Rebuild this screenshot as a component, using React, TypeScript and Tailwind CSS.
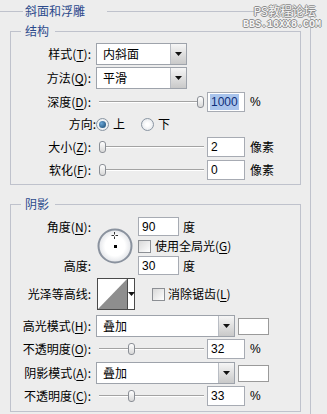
import type { ReactNode } from "react";

const U = ({ children }: { children: ReactNode }) => (
    <span className="underline underline-offset-[2px] decoration-[1px]">{children}</span>
);

const Label = ({ children }: { children: ReactNode }) => (
    <div className="w-[80px] shrink-0 text-right whitespace-nowrap">{children}</div>
);

const Arrow = () => (
    <svg width="7" height="4" viewBox="0 0 7 4">
        <path d="M0 0h7L3.5 4z" fill="#111" />
    </svg>
);

const Select = ({ value, w }: { value: string; w: string }) => (
    <div className={`${w} h-[22px] ml-[5px] flex border border-[#9ea3ab] bg-white`}>
        <div className="flex-1 pl-[6px] flex items-center">{value}</div>
        <div className="w-[16px] border-l border-[#b9bdc4] bg-gradient-to-b from-[#f6f6f6] to-[#c9c9c9] flex items-center justify-center">
            <Arrow />
        </div>
    </div>
);

const Slider = ({ pos }: { pos: number }) => (
    <div className="ml-[8px] w-[105px] h-full flex items-center">
        <div
            className="h-[2px] border-t border-[#a3a3a3] bg-white"
            style={{ width: pos }}
        />
        <div className="w-[7px] h-[12px] shrink-0 rounded-[3px] border border-[#8b8f96] bg-gradient-to-b from-[#ffffff] to-[#d8d8d8]" />
        <div className="flex-1 h-[2px] border-t border-[#a3a3a3] bg-white" />
    </div>
);

const NumBox = ({ children, w = "w-[38px]", h = "h-[20px]", ml = "ml-[3px]" }: { children: ReactNode; w?: string; h?: string; ml?: string }) => (
    <div className={`${w} ${h} ${ml} shrink-0 border border-[#a7abb3] bg-white pl-[3px] flex items-center font-['Liberation_Sans',sans-serif] text-[12px]`}>
        {children}
    </div>
);

const Radio = ({ on }: { on?: boolean }) => (
    <span className="w-[13px] h-[13px] shrink-0 rounded-full border border-[#8a96a3] bg-[radial-gradient(circle,#ffffff_20%,#dde1e6_100%)] flex items-center justify-center">
        {on && <span className="w-[7px] h-[7px] rounded-full bg-[radial-gradient(circle_at_35%_35%,#6aa6d6,#16456c)]" />}
    </span>
);

const Check = ({ ml = "ml-0" }: { ml?: string }) => (
    <span className={`${ml} block w-[13px] h-[13px] shrink-0 border border-[#8c8f94] bg-gradient-to-br from-[#d9d9d9] to-[#ffffff]`} />
);

const AngleDial = () => (
    <svg width="36" height="36" viewBox="0 0 36 36">
        <defs>
            <radialGradient id="dial" cx="50%" cy="50%" r="50%">
                <stop offset="60%" stopColor="#ffffff" />
                <stop offset="100%" stopColor="#e2e4e8" />
            </radialGradient>
        </defs>
        <circle cx="18" cy="18" r="16.5" fill="url(#dial)" stroke="#8a929e" strokeWidth="2" />
        <path d="M14.5 7.5h2.5M18.5 7.5h2.5M17.5 4v2.5M17.5 8.5v2.5" stroke="#333" strokeWidth="1" />
        <rect x="17" y="17" width="3" height="3" fill="#000" />
    </svg>
);

const Contour = () => (
    <div className="ml-[6px] w-[38px] h-[32px] flex border border-[#4a4a4a] bg-white">
        <svg width="29" height="30" viewBox="0 0 29 30" className="shrink-0">
            <rect width="29" height="30" fill="#fff" />
            <path d="M0 30L29 0V30z" fill="#8e8e8e" />
        </svg>
        <div className="flex-1 border-l border-[#4a4a4a] flex items-center justify-center">
            <Arrow />
        </div>
    </div>
);

const Swatch = () => (
    <div className="ml-[3px] w-[31px] h-[17px] border border-[#9a9a9a] bg-white" />
);

export default function App() {
    return (
        <div className="relative w-[327px] h-[414px] overflow-hidden bg-[#ededed] text-[12px] leading-[16px] text-black font-['Noto_Sans_CJK_SC',sans-serif]">
            <fieldset className="w-[311px] mt-[2px] border border-l-0 border-[#bfc2cc] pl-[10px] pr-[9px] pt-[3px] pb-[10px]">
                <legend className="ml-[13px] pl-[2px] pr-[22px] h-[18px] leading-[18px] text-[12px] text-[#2c4a8c]">
                    斜面和浮雕
                </legend>

                <fieldset className="w-[291px] border border-[#bfc2cc] pt-[4px] pb-[4px]">
                    <legend className="ml-[10px] pl-[4px] pr-[6px] h-[16px] leading-[16px] text-[#2c4a8c]">
                        结构
                    </legend>

                    <div className="h-[22px] flex items-center">
                        <Label>样式(<U>T</U>):</Label>
                        <Select value="内斜面" w="w-[91px]" />
                    </div>
                    <div className="mt-[2px] h-[22px] flex items-center">
                        <Label>方法(<U>Q</U>):</Label>
                        <Select value="平滑" w="w-[91px]" />
                    </div>
                    <div className="mt-[3px] h-[20px] flex items-center">
                        <Label>深度(<U>D</U>):</Label>
                        <Slider pos={98} />
                        <NumBox>
                            <span className="bg-[#a9c4ec] text-[#0e2f7a] -ml-[1px] px-[1px]">1000</span>
                        </NumBox>
                        <span className="ml-[5px] font-['Liberation_Sans',sans-serif]">%</span>
                    </div>
                    <div className="mt-[2px] h-[20px] flex items-center">
                        <div className="w-[85px] shrink-0 text-right">方向:</div>
                        <Radio on />
                        <span className="ml-[4px]">上</span>
                        <span className="ml-[16px] flex">
                            <Radio />
                        </span>
                        <span className="ml-[4px]">下</span>
                    </div>
                    <div className="mt-[3px] h-[20px] flex items-center">
                        <Label>大小(<U>Z</U>):</Label>
                        <Slider pos={0} />
                        <NumBox>2</NumBox>
                        <span className="ml-[5px]">像素</span>
                    </div>
                    <div className="mt-[3px] h-[20px] flex items-center">
                        <Label>软化(<U>F</U>):</Label>
                        <Slider pos={0} />
                        <NumBox>0</NumBox>
                        <span className="ml-[5px]">像素</span>
                    </div>
                </fieldset>

                <fieldset className="w-[291px] mt-[11px] border border-[#bfc2cc] pt-[5px] pb-[5px]">
                    <legend className="ml-[10px] pl-[4px] pr-[6px] h-[16px] leading-[16px] text-[#2c4a8c]">
                        阴影
                    </legend>

                    <div className="grid grid-cols-[80px_47px_1fr] grid-rows-[19px_16px_19px] gap-y-[2px] items-center">
                        <div className="text-right">角度(<U>N</U>):</div>
                        <div className="row-span-3 justify-self-center self-center">
                            <AngleDial />
                        </div>
                        <div className="flex items-center">
                            <NumBox w="w-[41px]" h="h-[19px]" ml="ml-0">90</NumBox>
                            <span className="ml-[4px]">度</span>
                        </div>
                        <div />
                        <div className="flex items-center">
                            <Check />
                            <span className="ml-[4px]">使用全局光(<U>G</U>)</span>
                        </div>
                        <div className="text-right">高度:</div>
                        <div className="flex items-center">
                            <NumBox w="w-[41px]" h="h-[19px]" ml="ml-0">30</NumBox>
                            <span className="ml-[4px]">度</span>
                        </div>
                    </div>

                    <div className="mt-[3px] h-[32px] flex items-center">
                        <Label>光泽等高线:</Label>
                        <Contour />
                        <Check ml="ml-[17px]" />
                        <span className="ml-[3px]">消除锯齿(<U>L</U>)</span>
                    </div>

                    <div className="mt-[5px] h-[22px] flex items-center">
                        <Label>高光模式(<U>H</U>):</Label>
                        <Select value="叠加" w="w-[139px]" />
                        <Swatch />
                    </div>
                    <div className="mt-[2px] h-[20px] flex items-center">
                        <Label>不透明度(<U>O</U>):</Label>
                        <Slider pos={29} />
                        <NumBox>32</NumBox>
                        <span className="ml-[5px] font-['Liberation_Sans',sans-serif]">%</span>
                    </div>
                    <div className="mt-[3px] h-[22px] flex items-center">
                        <Label>阴影模式(<U>A</U>):</Label>
                        <Select value="叠加" w="w-[139px]" />
                        <Swatch />
                    </div>
                    <div className="mt-[2px] h-[20px] flex items-center">
                        <Label>不透明度(<U>C</U>):</Label>
                        <Slider pos={29} />
                        <NumBox>33</NumBox>
                        <span className="ml-[5px] font-['Liberation_Sans',sans-serif]">%</span>
                    </div>
                </fieldset>
            </fieldset>

            <div className="absolute top-[4px] right-[11px] text-[12px] leading-[14px] text-[#f6f6f6] [text-shadow:1px_0_#8c8c8c,-1px_0_#8c8c8c,0_1px_#8c8c8c,0_-1px_#8c8c8c]">
                PS教程论坛
            </div>
            <div className="absolute top-[19px] right-[6px] text-[10px] leading-[11px] font-['Liberation_Mono',monospace] font-bold text-[#f6f6f6] [text-shadow:1px_0_#8c8c8c,-1px_0_#8c8c8c,0_1px_#8c8c8c,0_-1px_#8c8c8c]">
                BBS.16XX8.COM
            </div>
        </div>
    );
}
